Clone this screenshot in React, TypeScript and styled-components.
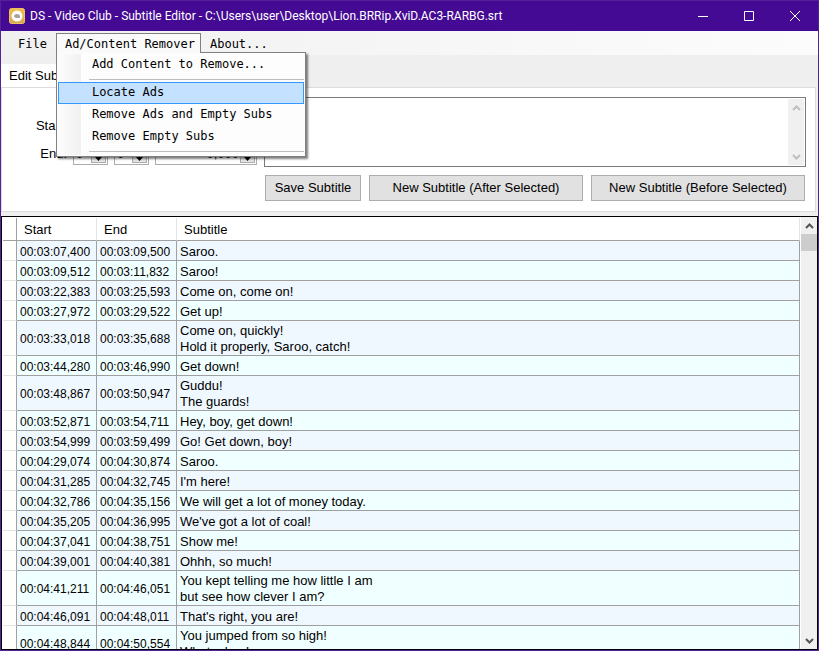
import React from "react";
import styled, { createGlobalStyle, css } from "styled-components";

const sans = `"Liberation Sans", Arial, sans-serif`;
const mono = `"DejaVu Sans Mono", monospace`;

const GlobalStyle = createGlobalStyle`
  *, *::before, *::after { box-sizing: border-box; }
  body { margin: 0; font: 13px/16px ${sans}; color: #000; overflow: hidden; }
  button, input, textarea { font: inherit; color: inherit; margin: 0; }
`;

const Window = styled.div`
  height: 100vh;
  display: flex;
  flex-direction: column;
  background: #efefef;
  border: 1px solid #54219b;
`;

const TitleBar = styled.header`
  flex: none;
  height: 30px;
  display: flex;
  align-items: center;
  background: #450a94;
  color: #fff;
  padding-left: 8px;
`;

const Title = styled.h1`
  flex: 1;
  margin: 0 0 0 5px;
  font: 400 12px/16px Roboto, "Open Sans", sans-serif;
  white-space: nowrap;
`;

const CaptionButton = styled.button`
  width: 46px;
  height: 30px;
  padding: 0;
  border: 0;
  background: transparent;
  color: #fff;
  display: grid;
  place-items: center;
`;

const MenuBar = styled.nav`
  flex: none;
  height: 24px;
  display: flex;
  align-items: flex-start;
  padding: 2px 0 0 8px;
  background: linear-gradient(90deg, #f0f0f0, #fcfcfc);
  font: 12px/16px ${mono};
`;

const MenuGroup = styled.div`
  position: relative;
`;

const MenuButton = styled.button<{ $open?: boolean }>`
  height: 20px;
  padding: 0 ${(p) => (p.$open ? 5 : 8)}px 0 8px;
  border: 1px solid ${(p) => (p.$open ? "#808080" : "transparent")};
  border-bottom: 0;
  background: ${(p) => (p.$open ? "#fafafa" : "transparent")};
  white-space: nowrap;
  position: relative;
  z-index: ${(p) => (p.$open ? 3 : "auto")};
`;

const Dropdown = styled.div`
  position: absolute;
  z-index: 2;
  left: 0;
  top: 19px;
  width: 250px;
  padding: 1px 1px 2px;
  border: 1px solid #808080;
  background: linear-gradient(90deg, #fcfcfc, #f1f1f1) 1px 1px / 23px calc(100% - 2px) no-repeat, #fdfdfd;
  box-shadow: 2px 2px 2px rgba(0, 0, 0, 0.5);
`;

const MenuItem = styled.button<{ $active?: boolean }>`
  display: block;
  width: 100%;
  height: 22px;
  padding: 0 0 2px 33px;
  border: 1px solid ${(p) => (p.$active ? "#3399ff" : "transparent")};
  background: ${(p) => (p.$active ? "#c4e1ff" : "transparent")};
  text-align: left;
  white-space: nowrap;
`;

const Separator = styled.hr`
  margin: 3px 0 2px 31px;
  border: 0;
  border-top: 1px solid #bdbdbd;
`;

const TabStrip = styled.div`
  flex: none;
  display: flex;
  padding: 9px 0 0;
`;

const Tab = styled.button`
  height: 23px;
  padding: 0 8px;
  border: 0;
  background: #fff;
`;

const TabPage = styled.section`
  flex: none;
  display: grid;
  grid-template-columns: auto 1fr;
  column-gap: 7px;
  margin: 0 2px 4px 0;
  padding: 9px 9px 10px 15px;
  background: #fff;
  border: 1px solid #dcdcdc;
`;

const TimeFields = styled.div`
  padding-top: 18px;
`;

const TimeRow = styled.div`
  display: flex;
  align-items: center;
  gap: 6px;
  margin-bottom: 6px;
`;

const TimeLabel = styled.label`
  width: 50px;
  text-align: right;
`;

const Spinner = styled.span<{ $wide?: boolean }>`
  display: flex;
  width: ${(p) => (p.$wide ? 102 : 35)}px;
  height: 22px;
  border: 1px solid #abadb3;
  padding: 1px;
`;

const SpinnerInput = styled.input<{ $right?: boolean }>`
  flex: 1;
  min-width: 0;
  border: 0;
  padding: 0 1px;
  background: transparent;
  text-align: ${(p) => (p.$right ? "right" : "left")};
`;

const SpinnerButtons = styled.span`
  display: flex;
  flex-direction: column;
  width: 15px;
`;

const SpinnerButton = styled.button`
  flex: 1;
  min-height: 0;
  padding: 0;
  border: 1px solid #adadad;
  background: #e6e6e6;
  display: grid;
  place-items: center;
`;

const Editor = styled.div`
  display: flex;
  flex-direction: column;
  gap: 8px;
  min-width: 0;
`;

const TextFrame = styled.div`
  display: flex;
  height: 70px;
  padding: 1px;
  border: 1px solid #7a7a7a;
`;

const SubtitleText = styled.textarea`
  flex: 1;
  border: 0;
  padding: 2px;
  resize: none;
  outline: 0;
`;

const ScrollTrack = styled.div`
  flex: none;
  width: 16px;
  display: flex;
  flex-direction: column;
  background: #f0f0f0;
`;

const ScrollButton = styled.button<{ $dim?: boolean; $end?: boolean }>`
  height: 17px;
  padding: 0;
  border: 0;
  background: transparent;
  color: ${(p) => (p.$dim ? "#bfbfbf" : "#555")};
  display: grid;
  place-items: center;
  ${(p) => p.$end && css`margin-top: auto;`}
`;

const ScrollThumb = styled.div`
  height: 17px;
  background: #cdcdcd;
`;

const Actions = styled.div`
  display: grid;
  grid-template-columns: 96fr 214fr 214fr;
  gap: 8px;
  padding: 0 1px;
`;

const ActionButton = styled.button`
  height: 26px;
  padding: 0;
  border: 1px solid #adadad;
  background: #e1e1e1;
  white-space: nowrap;
`;

const GridFrame = styled.section`
  flex: 1;
  min-height: 0;
  display: flex;
  border: 1px solid #000;
  background: #fff;
`;

const GridView = styled.div`
  flex: 1;
  min-width: 0;
  overflow: hidden;
  padding: 1px 1px 0 1px;
`;

const Table = styled.table`
  width: 100%;
  table-layout: fixed;
  border-collapse: separate;
  border-spacing: 0;
`;

const line = "1px solid #a0a0a0";

const HeadCell = styled.th<{ $width?: number }>`
  width: ${(p) => (p.$width ? `${p.$width}px` : "auto")};
  height: 23px;
  padding: 2px 7px 0;
  border-right: 1px solid #e3e3e3;
  border-bottom: ${line};
  font-weight: 400;
  text-align: left;
`;

const CornerCell = styled(HeadCell)`
  padding: 0;
  border-right: ${line};
`;

const RowHandle = styled.td`
  padding: 0;
  border-right: ${line};
  border-bottom: 1px solid #e3e3e3;
`;

const Row = styled.tr`
  &:nth-child(odd) { background: #f0f8ff; }
  &:nth-child(even) { background: #f0ffff; }
  & > ${RowHandle} { background: #fff; }
`;

const Cell = styled.td`
  height: 20px;
  padding: 2px 3px 0;
  border-right: ${line};
  border-bottom: ${line};
  white-space: pre;
`;

const TimeCell = styled(Cell)`
  font-size: 12px;
`;

const Chevron = ({ down }: { down?: boolean }) => (
  <svg width="9" height="6" viewBox="0 0 9 6" fill="none" stroke="currentColor" strokeWidth="2" aria-hidden="true">
    <path d={down ? "M1 1L4.5 4.5L8 1" : "M1 5L4.5 1.5L8 5"} />
  </svg>
);

const Triangle = ({ down }: { down?: boolean }) => (
  <svg width="7" height="4" viewBox="0 0 7 4" aria-hidden="true">
    <path d={down ? "M0 0h7L3.5 4z" : "M0 4h7L3.5 0z"} />
  </svg>
);

const AppIcon = () => (
  <svg width="16" height="16" viewBox="0 0 16 16" aria-hidden="true">
    <defs>
      <linearGradient id="gold" x1="0" y1="0" x2="0" y2="1">
        <stop offset="0" stopColor="#f2bd4a" />
        <stop offset="1" stopColor="#d6a850" />
      </linearGradient>
    </defs>
    <rect x="0.5" y="0.5" width="15" height="15" rx="2" fill="url(#gold)" stroke="#e8c468" />
    <circle cx="8" cy="8" r="5.500" fill="#fff" />
    <path d="M5 8.500a3 2.500 0 0 1 6 0v1.500h-4.500z" fill="#a8a59b" />
  </svg>
);

const subtitles: [string, string, string][] = [
  ["00:03:07,400", "00:03:09,500", "Saroo."],
  ["00:03:09,512", "00:03:11,832", "Saroo!"],
  ["00:03:22,383", "00:03:25,593", "Come on, come on!"],
  ["00:03:27,972", "00:03:29,522", "Get up!"],
  ["00:03:33,018", "00:03:35,688", "Come on, quickly!\nHold it properly, Saroo, catch!"],
  ["00:03:44,280", "00:03:46,990", "Get down!"],
  ["00:03:48,867", "00:03:50,947", "Guddu!\nThe guards!"],
  ["00:03:52,871", "00:03:54,711", "Hey, boy, get down!"],
  ["00:03:54,999", "00:03:59,499", "Go! Get down, boy!"],
  ["00:04:29,074", "00:04:30,874", "Saroo."],
  ["00:04:31,285", "00:04:32,745", "I'm here!"],
  ["00:04:32,786", "00:04:35,156", "We will get a lot of money today."],
  ["00:04:35,205", "00:04:36,995", "We've got a lot of coal!"],
  ["00:04:37,041", "00:04:38,751", "Show me!"],
  ["00:04:39,001", "00:04:40,381", "Ohhh, so much!"],
  ["00:04:41,211", "00:04:46,051", "You kept telling me how little I am\nbut see how clever I am?"],
  ["00:04:46,091", "00:04:48,011", "That's right, you are!"],
  ["00:04:48,844", "00:04:50,554", "You jumped from so high!\nWhat a boy!"],
];

type SpinProps = { id?: string; label: string; value: string; wide?: boolean };

const Spin = ({ id, label, value, wide }: SpinProps) => (
  <Spinner $wide={wide}>
    <SpinnerInput id={id} aria-label={label} defaultValue={value} $right={wide} />
    <SpinnerButtons>
      <SpinnerButton aria-label={`Increase ${label}`}><Triangle /></SpinnerButton>
      <SpinnerButton aria-label={`Decrease ${label}`}><Triangle down /></SpinnerButton>
    </SpinnerButtons>
  </Spinner>
);

const TimeEditor = ({ id, name }: { id: string; name: string }) => (
  <TimeRow>
    <TimeLabel htmlFor={id}>{name}:</TimeLabel>
    <Spin id={id} label={`${name} hours`} value="0" />
    <Spin label={`${name} minutes`} value="0" />
    <Spin label={`${name} seconds`} value="0,000" wide />
  </TimeRow>
);

export default function App() {
  return (
    <Window>
      <GlobalStyle />
      <TitleBar>
        <AppIcon />
        <Title>DS - Video Club - Subtitle Editor - C:\Users\user\Desktop\Lion.BRRip.XviD.AC3-RARBG.srt</Title>
        <CaptionButton aria-label="Minimize">
          <svg width="10" height="10" viewBox="0 0 10 10"><path d="M0 5.5h10" stroke="currentColor" /></svg>
        </CaptionButton>
        <CaptionButton aria-label="Maximize">
          <svg width="10" height="10" viewBox="0 0 10 10"><path d="M.5.5h9v9h-9z" fill="none" stroke="currentColor" /></svg>
        </CaptionButton>
        <CaptionButton aria-label="Close">
          <svg width="10" height="10" viewBox="0 0 10 10"><path d="M0 0l10 10M10 0L0 10" stroke="currentColor" /></svg>
        </CaptionButton>
      </TitleBar>
      <MenuBar>
        <MenuButton>File</MenuButton>
        <MenuGroup>
          <MenuButton $open aria-expanded>Ad/Content Remover</MenuButton>
          <Dropdown>
            <MenuItem>Add Content to Remove...</MenuItem>
            <Separator />
            <MenuItem $active>Locate Ads</MenuItem>
            <MenuItem>Remove Ads and Empty Subs</MenuItem>
            <MenuItem>Remove Empty Subs</MenuItem>
            <Separator />
          </Dropdown>
        </MenuGroup>
        <MenuButton>About...</MenuButton>
      </MenuBar>
      <TabStrip>
        <Tab>Edit Subtitle</Tab>
      </TabStrip>
      <TabPage>
        <TimeFields>
          <TimeEditor id="start" name="Start" />
          <TimeEditor id="end" name="End" />
        </TimeFields>
        <Editor>
          <TextFrame>
            <SubtitleText aria-label="Subtitle text" />
            <ScrollTrack>
              <ScrollButton $dim aria-label="Scroll text up"><Chevron /></ScrollButton>
              <ScrollButton $dim $end aria-label="Scroll text down"><Chevron down /></ScrollButton>
            </ScrollTrack>
          </TextFrame>
          <Actions>
            <ActionButton>Save Subtitle</ActionButton>
            <ActionButton>New Subtitle (After Selected)</ActionButton>
            <ActionButton>New Subtitle (Before Selected)</ActionButton>
          </Actions>
        </Editor>
      </TabPage>
      <GridFrame>
        <GridView>
          <Table>
            <thead>
              <tr>
                <CornerCell $width={14} aria-label="Row" />
                <HeadCell $width={80}>Start</HeadCell>
                <HeadCell $width={80}>End</HeadCell>
                <HeadCell>Subtitle</HeadCell>
              </tr>
            </thead>
            <tbody>
              {subtitles.map(([start, end, text]) => (
                <Row key={start}>
                  <RowHandle />
                  <TimeCell>{start}</TimeCell>
                  <TimeCell>{end}</TimeCell>
                  <Cell>{text}</Cell>
                </Row>
              ))}
            </tbody>
          </Table>
        </GridView>
        <ScrollTrack>
          <ScrollButton aria-label="Scroll up"><Chevron /></ScrollButton>
          <ScrollThumb />
          <ScrollButton $end aria-label="Scroll down"><Chevron down /></ScrollButton>
        </ScrollTrack>
      </GridFrame>
    </Window>
  );
}
